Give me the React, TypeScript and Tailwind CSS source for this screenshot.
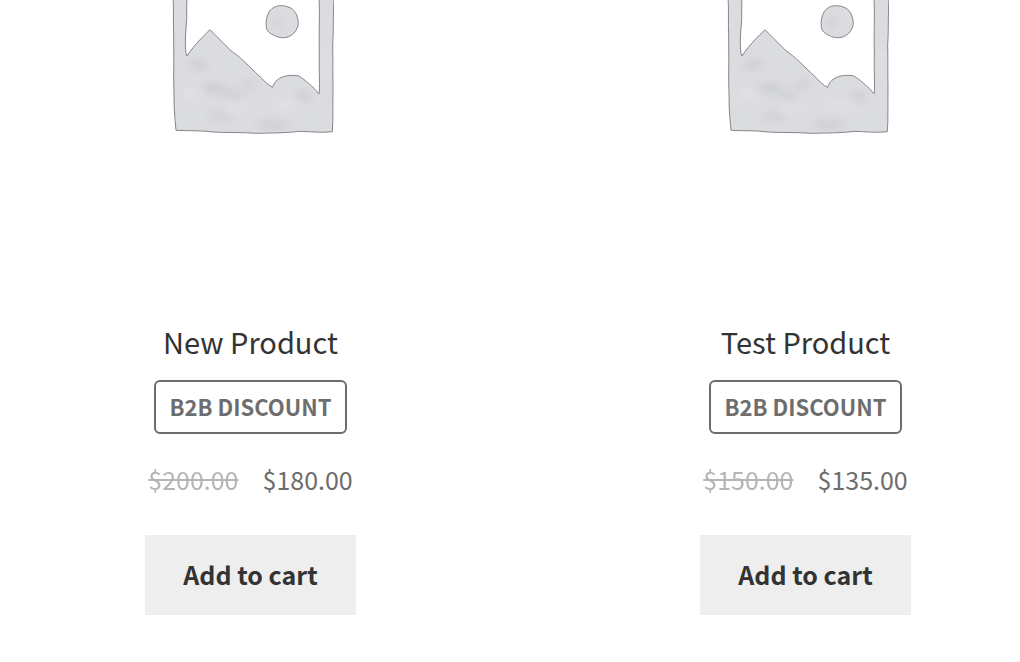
import { useId } from "react";

type Product = {
  name: string;
  badge: string;
  regularPrice: string;
  salePrice: string;
};

const products: Product[] = [
  {
    name: "New Product",
    badge: "B2B Discount",
    regularPrice: "$200.00",
    salePrice: "$180.00",
  },
  {
    name: "Test Product",
    badge: "B2B Discount",
    regularPrice: "$150.00",
    salePrice: "$135.00",
  },
];

const framePath =
  "M39 -12 C42 25 39 65 41 110 C41 155 42 200 41 245 C43 285 41 320 45 358 L48 391 C85 393 125 391 160 396 C205 399 245 396 286 400 C335 399 380 399 420 394 C455 395 485 399 517 395 C520 355 518 310 519 260 C518 210 519 175 518 135 C521 90 519 50 522 -12 L477 -12 C480 45 476 110 478 165 C476 200 480 241 478 281 L475 280 C469 270 457 260 447 251 C437 243 427 233 414 227 C398 225 384 226 370 230 C355 235 345 244 340 256 L338 262 C325 256 314 245 305 235 C280 212 258 188 233 167 C222 158 211 153 203 142 C187 126 169 108 150 89 C130 108 112 127 100 142 C93 151 86 160 81 168 C75 157 77 140 76 124 C76 90 82 60 80 30 L81 -12 Z";

const sunPath =
  "M365 17 C387 18 403 28 409 43 C412 52 415 62 415 71 C412 90 402 103 386 110 C373 115 357 114 344 107 C330 101 321 94 319 82 C317 66 319 50 327 36 C336 22 350 17 365 17 Z";

const PlaceholderImage = () => {
  const id = useId();

  return (
    <svg
      viewBox="21 0 501 420"
      className="w-[167px] h-[140px] shrink-0"
      role="img"
      aria-label="Awaiting product image"
    >
      <defs>
        <clipPath id={`${id}-clip`}>
          <path d={framePath} />
          <path d={sunPath} />
        </clipPath>
        <filter id={`${id}-soft`} x="-50%" y="-50%" width="200%" height="200%">
          <feGaussianBlur stdDeviation="12" />
        </filter>
      </defs>

      <g fill="#dbdce0">
        <path d={framePath} />
        <path d={sunPath} />
      </g>

      {/* watercolour wash */}
      <g clipPath={`url(#${id}-clip)`}>
        <g fill="#cbccd1" filter={`url(#${id}-soft)`}>
          <ellipse cx="115" cy="195" rx="30" ry="12" />
          <ellipse cx="165" cy="265" rx="36" ry="14" />
          <ellipse cx="220" cy="285" rx="30" ry="10" />
          <ellipse cx="265" cy="255" rx="22" ry="10" />
          <ellipse cx="180" cy="350" rx="38" ry="9" />
          <ellipse cx="340" cy="375" rx="52" ry="11" />
          <ellipse cx="430" cy="290" rx="24" ry="14" />
          <ellipse cx="350" cy="67" rx="14" ry="12" />
        </g>
        <g fill="#e0e1e5" filter={`url(#${id}-soft)`}>
          <ellipse cx="95" cy="285" rx="26" ry="20" />
          <ellipse cx="230" cy="325" rx="42" ry="10" />
          <ellipse cx="375" cy="315" rx="48" ry="14" />
          <ellipse cx="500" cy="190" rx="9" ry="50" />
        </g>
      </g>

      <g fill="none" stroke="#85868a" strokeWidth="3" strokeLinejoin="round">
        <path d={framePath} />
        <path d={sunPath} />
      </g>
    </svg>
  );
};

const ProductCard = ({ product }: { product: Product }) => {
  return (
    <li className="flex flex-col items-center text-center">
      <PlaceholderImage />

      <h2 className="mt-[181px] text-[29px] leading-10 text-[#333333]">
        {product.name}
      </h2>

      <span className="mt-[19px] rounded-md border-2 border-[#6d6d6d] px-[14px] pt-1 pb-1.5 text-[22px] leading-10 font-bold uppercase text-[#6d6d6d]">
        {product.badge}
      </span>

      <p className="mt-[25px] flex gap-6 text-[25px] leading-10 text-[#6d6d6d]">
        <del className="opacity-50">{product.regularPrice}</del>
        <ins className="no-underline">{product.salePrice}</ins>
      </p>

      <button
        type="button"
        className="mt-9 bg-[#eeeeee] px-[38px] pt-[19px] pb-[21px] text-[25px] leading-10 font-bold text-[#333333] cursor-pointer hover:bg-[#d5d5d5]"
      >
        Add to cart
      </button>
    </li>
  );
};

const App = () => {
  return (
    <main className="overflow-hidden bg-white pb-12 pl-9 font-['Noto_Sans_CJK_SC',sans-serif]">
      <ul className="grid grid-cols-2 gap-x-[126px]">
        {products.map((product) => (
          <ProductCard key={product.name} product={product} />
        ))}
      </ul>
    </main>
  );
};

export default App;
